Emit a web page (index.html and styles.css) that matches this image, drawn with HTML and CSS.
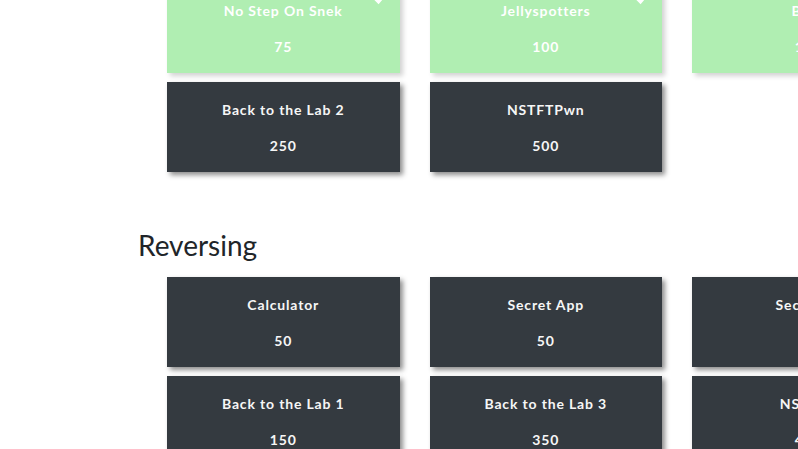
FILE: index.html
```html
<!DOCTYPE html>
<html lang="en">
<head>
<meta charset="utf-8">
<title>Challenges</title>
<link rel="stylesheet" href="styles.css">
</head>
<body>
<main class="board">
  <section class="category">
    <div class="grid">
      <div class="card solved">
        <svg class="check" viewBox="0 0 16 16" width="16" height="16"><path d="M2 8.5 L6.5 13 L15 3" fill="none" stroke="#fff" stroke-width="3"/></svg>
        <div class="title">No Step On Snek</div>
        <div class="points">75</div>
      </div>
      <div class="card solved">
        <svg class="check" viewBox="0 0 16 16" width="16" height="16"><path d="M2 8.5 L6.5 13 L15 3" fill="none" stroke="#fff" stroke-width="3"/></svg>
        <div class="title">Jellyspotters</div>
        <div class="points">100</div>
      </div>
      <div class="card solved">
        <div class="title">Bash</div>
        <div class="points">100</div>
      </div>
      <div class="card">
        <div class="title">Back to the Lab 2</div>
        <div class="points">250</div>
      </div>
      <div class="card">
        <div class="title">NSTFTPwn</div>
        <div class="points">500</div>
      </div>
    </div>
  </section>
  <section class="category">
    <h2 class="cat-title">Reversing</h2>
    <div class="grid">
      <div class="card">
        <div class="title">Calculator</div>
        <div class="points">50</div>
      </div>
      <div class="card">
        <div class="title">Secret App</div>
        <div class="points">50</div>
      </div>
      <div class="card">
        <div class="title">Secretive</div>
        <div class="points">75</div>
      </div>
      <div class="card">
        <div class="title">Back to the Lab 1</div>
        <div class="points">150</div>
      </div>
      <div class="card">
        <div class="title">Back to the Lab 3</div>
        <div class="points">350</div>
      </div>
      <div class="card">
        <div class="title">NSTFTP</div>
        <div class="points">400</div>
      </div>
    </div>
  </section>
</main>
</body>
</html>
```
FILE: styles.css
```css
html, body {
  margin: 0;
  padding: 0;
  background: #ffffff;
  overflow: hidden;
}
body {
  font-family: Lato, "Noto Sans", sans-serif;
  color: #212529;
  width: 798px;
  height: 449px;
}
.board {
  margin-top: -17px;
  padding-left: 138px;
}
.category + .category {
  margin-top: 57px;
}
.cat-title {
  margin: 0 0 15px 0;
  font-size: 28px;
  font-weight: 400;
  line-height: 1.2;
  color: #212529;
}
.grid {
  display: grid;
  grid-template-columns: repeat(3, 232.5px);
  column-gap: 30px;
  row-gap: 8.5px;
  margin-left: 29px;
  width: 760px;
}
.card {
  position: relative;
  height: 90px;
  background: #343a40;
  color: #f6f6f6;
  box-shadow: 3px 3px 5px rgba(0, 0, 0, 0.45);
  display: flex;
  flex-direction: column;
  align-items: center;
  padding-top: 19px;
  box-sizing: border-box;
  font-weight: 700;
  font-size: 14px;
  letter-spacing: 0.06em;
}
.card.solved {
  background: #b0eeb2;
  color: #ffffff;
  box-shadow: 3px 3px 5px rgba(0, 0, 0, 0.18);
}
.title {
  line-height: 18px;
}
.points {
  margin-top: 18px;
  line-height: 18px;
}
.check {
  position: absolute;
  top: 6px;
  right: 12px;
}
```
